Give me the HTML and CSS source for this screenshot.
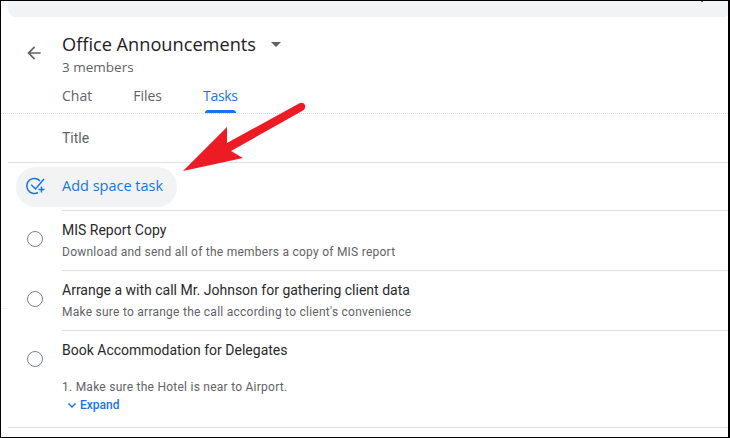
FILE: index.html
```html
<!DOCTYPE html>
<html lang="en">
<head>
  <meta charset="UTF-8">
  <title>Office Announcements</title>
  <link rel="stylesheet" href="styles.css">
</head>
<body>
  <div class="frame">
    <div class="topbar"></div>
    <span class="tick"></span>
    <span class="edge-mark"></span>

    <div class="head">
      <svg class="back" width="20" height="20" viewBox="0 0 24 24"><path d="M20 11H7.800l5.600-5.600L12 4l-8 8 8 8 1.400-1.400L7.800 13H20z"/></svg>
      <div class="head-text">
        <div class="room">
          <span class="room-name">Office Announcements</span>
          <span class="caret"></span>
        </div>
        <div class="members">3 members</div>
      </div>
    </div>

    <div class="tabs">
      <div class="tab">Chat</div>
      <div class="tab">Files</div>
      <div class="tab active">Tasks</div>
    </div>

    <div class="title-row">Title</div>

    <div class="add-row">
      <div class="add-pill">
        <svg class="add-icon" width="20" height="20" viewBox="-0.500 1.500 20 20" fill="none" stroke="#1a73e8" stroke-width="1.500">
          <path d="M13.500 5.500A7.500 7.500 0 1 0 11.500 17"/>
          <path d="M4.700 9.200L9 13.500 17.500 3.500"/>
          <path d="M15 11v6M12 14h6"/>
        </svg>
        <span class="add-label">Add space task</span>
      </div>
    </div>

    <div class="task">
      <span class="check"></span>
      <div class="task-body">
        <div class="task-title">MIS Report Copy</div>
        <div class="task-desc">Download and send all of the members a copy of MIS report</div>
      </div>
    </div>
    <div class="task">
      <span class="check"></span>
      <div class="task-body">
        <div class="task-title">Arrange a with call Mr. Johnson for gathering client data</div>
        <div class="task-desc">Make sure to arrange the call according to client's convenience</div>
      </div>
    </div>
    <div class="task last">
      <span class="check"></span>
      <div class="task-body">
        <div class="task-title">Book Accommodation for Delegates</div>
        <div class="task-desc spaced">1. Make sure the Hotel is near to Airport.</div>
        <div class="expand">
          <svg width="12" height="12" viewBox="0 0 12 12" fill="none" stroke="#1a73e8" stroke-width="1.5"><path d="M2.500 4.500L6 8l3.500-3.500"/></svg>
          <span>Expand</span>
        </div>
      </div>
    </div>
    <div class="list-end"></div>

    <!-- red annotation arrow -->
    <svg class="arrow" width="730" height="438" viewBox="0 0 730 438">
      <path fill="#ed1c24" d="M183 171L227 127L227 143L299 103.500Q303 101.500 305 105Q306 108.500 303 110.500L231 151L243 158Z"/>
    </svg>
  </div>
</body>
</html>
```

FILE: styles.css
```css
* {
  box-sizing: border-box;
}

body {
  margin: 0;
  background: #fff;
  font-family: Roboto, "Liberation Sans", sans-serif;
  overflow: hidden;
}

.frame {
  position: relative;
  width: 730px;
  height: 438px;
  border: 1px solid #000;
  border-right-width: 2px;
  overflow: hidden;
}

.topbar {
  height: 16px;
  margin-left: 7px;
  background: #f1f3f4;
  border-radius: 0 0 4px 8px;
}

.tick {
  position: absolute;
  top: 0;
  left: 700px;
  width: 2px;
  height: 1px;
  background: #5f6368;
}

.edge-mark {
  position: absolute;
  top: 307px;
  left: 0;
  width: 7px;
  height: 1px;
  background: #eee;
}

/* header */
.head {
  display: flex;
  height: 64px;
  padding: 15px 0 0 23px;
}

.back {
  fill: #5f6368;
  margin: 11px 18px 0 0;
}

.room {
  display: flex;
  align-items: center;
  height: 24px;
}

.room-name {
  font-family: "Open Sans", sans-serif;
  font-size: 18.200px;
  color: #202124;
}

.caret {
  margin-left: 15px;
  border-left: 5px solid transparent;
  border-right: 5px solid transparent;
  border-top: 5px solid #5f6368;
}

.members {
  margin-top: 2px;
  font-family: "Open Sans", sans-serif;
  font-size: 13.500px;
  color: #5f6368;
}

/* tabs */
.tabs {
  display: flex;
  height: 33px;
  padding-left: 61px;
  border-bottom: 1px dotted #d8d8d8;
}

.tab {
  font-family: "Open Sans", sans-serif;
  font-size: 14px;
  line-height: 30px;
  color: #5f6368;
  margin-right: 41px;
}

.tab.active {
  position: relative;
  width: 35px;
  letter-spacing: -0.3px;
  color: #1a73e8;
}

.tab.active::after {
  content: "";
  position: absolute;
  left: 2px;
  width: 31px;
  bottom: 0;
  height: 3px;
  background: #1a73e8;
  border-radius: 3px 3px 0 0;
}

.title-row {
  height: 49px;
  margin-left: 7px;
  padding-left: 54px;
  font-size: 14px;
  line-height: 48px;
  color: #5f6368;
  border-bottom: 1px solid #e0e0e0;
}

/* add task */
.add-row {
  height: 47px;
  padding: 4px 0 0 15px;
}

.add-pill {
  display: flex;
  align-items: center;
  width: 161px;
  height: 40px;
  padding-left: 10px;
  border-radius: 20px;
  background: #f1f3f4;
  font-family: "Open Sans", sans-serif;
  font-size: 14.500px;
  color: #1a73e8;
}

.add-icon {
  margin-right: 16px;
}

.add-label {
  padding-bottom: 3px;
}

/* tasks */
.task {
  display: flex;
  height: 60px;
  padding-left: 26px;
}

.check {
  flex: none;
  width: 16px;
  height: 16px;
  margin-top: 21px;
  border: 1.500px solid #7b828c;
  border-radius: 50%;
}

.task-body {
  flex: 1;
  margin-left: 19px;
  padding-top: 10px;
  border-top: 1px solid #e0e0e0;
}

.task-title {
  font-size: 14px;
  line-height: 18px;
  color: #28292c;
}

.task-desc {
  margin-top: 4px;
  font-size: 12px;
  line-height: 18px;
  letter-spacing: 0.25px;
  color: #5f6368;
}

.task-desc.spaced {
  margin-top: 19px;
}

.task.last {
  height: 97px;
}

.expand {
  display: flex;
  align-items: center;
  gap: 2px;
  margin-left: 4px;
  font-size: 12px;
  font-weight: 500;
  line-height: 18px;
  color: #1a73e8;
}

.list-end {
  margin-left: 7px;
  border-top: 1px solid #e0e0e0;
}

.arrow {
  position: absolute;
  top: -1px;
  left: -1px;
}
```
